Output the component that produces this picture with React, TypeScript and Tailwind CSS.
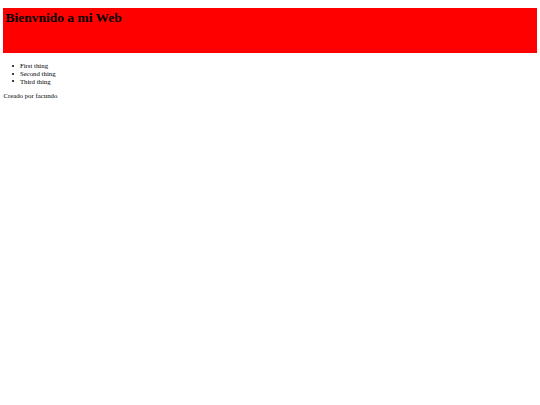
const items = ["First thing", "Second thing", "Third thing"];

export default function App() {
  return (
    <div className="min-h-screen bg-white px-[3.4px] pt-[8px] text-black font-['Liberation_Serif',serif]">
      {/* cabecera */}
      <header className="h-[45px] bg-[#ff0000] px-[2px] pt-[2px]">
        <h1 className="text-[13.5px] font-bold leading-[15px]">Bienvnido a mi Web</h1>
      </header>

      <ul className="mt-[9px] pl-[9px] text-[6.8px] leading-[7.8px]">
        {items.map((item) => (
          <li key={item} className="flex items-center gap-[5.5px]">
            <span className="h-[2px] w-[2px] rounded-full bg-black" />
            {item}
          </li>
        ))}
      </ul>

      <p className="mt-[6.7px] text-[6.8px] leading-[7.8px]">Creado por facundo</p>
    </div>
  );
}
